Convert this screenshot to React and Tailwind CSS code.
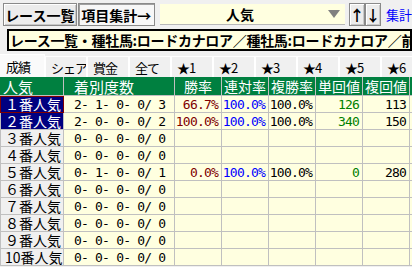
import React from 'react';

const rows = [
    { name: '１番人気', rec: '2- 1- 0- 0/ 3', win: '66.7%', ren: '100.0%', fuku: '100.0%', tan: '126', fk: '113', sel: true, focus: true },
    { name: '２番人気', rec: '2- 0- 0- 0/ 2', win: '100.0%', ren: '100.0%', fuku: '100.0%', tan: '340', fk: '150', sel: true },
    { name: '３番人気', rec: '0- 0- 0- 0/ 0' },
    { name: '４番人気', rec: '0- 0- 0- 0/ 0' },
    { name: '５番人気', rec: '0- 1- 0- 0/ 1', win: '0.0%', ren: '100.0%', fuku: '100.0%', tan: '0', fk: '280' },
    { name: '６番人気', rec: '0- 0- 0- 0/ 0' },
    { name: '７番人気', rec: '0- 0- 0- 0/ 0' },
    { name: '８番人気', rec: '0- 0- 0- 0/ 0' },
    { name: '９番人気', rec: '0- 0- 0- 0/ 0' },
    { name: '10番人気', rec: '0- 0- 0- 0/ 0' },
];

const tabs = ['成績', 'シェア', '賞金', '全て', '★1', '★2', '★3', '★4', '★5', '★6'];

const cols = 'grid grid-cols-[64px_111px_47px_47px_47px_47px_47px_47px]';
const mono = "font-['DejaVu_Sans_Mono',monospace] text-[13px] tracking-[-0.8px] whitespace-pre";
const bevel = 'border border-[#8a8a8a] shadow-[inset_1px_1px_0_#ffffff,inset_-1px_-1px_0_#c8c8c8] bg-[#ececec]';

function Num({ children, color }) {
    return (
        <div className={`h-[17px] border-r border-b border-[#c0c0c0] bg-[#ffffe0] flex items-center justify-end pr-[3px] ${mono} ${color}`}>
            {children}
        </div>
    );
}

export default function App() {
    return (
        <div className="w-[412px] h-[267px] overflow-hidden bg-[#f0f0f0] text-black font-['Noto_Sans_CJK_JP',sans-serif] leading-none">
            {/* Top bar */}
            <div className="flex items-start h-[28px] pt-[3px] pl-[3px] whitespace-nowrap">
                <button className={`w-[74px] h-[23px] ${bevel} text-[14px] font-bold flex items-center justify-center`}>
                    レース一覧
                </button>
                <button className="w-[78px] h-[23px] ml-[1px] border border-[#8a8a8a] bg-[#f7f7f7] shadow-[inset_1px_1px_0_#a0a0a0] text-[14px] font-bold flex items-center justify-center">
                    項目集計→
                </button>
                <div className="ml-[5px] mt-[1px] w-[186px] h-[21px] bg-[#ffffe0] border-b border-[#b8b8b8] flex items-center">
                    <span className="flex-1 text-center text-[14px] font-bold pr-[8px]">人気</span>
                    <svg width="12" height="8" viewBox="0 0 12 8" className="mr-[5px]">
                        <polygon points="0,0 12,0 6,8" fill="#808080" />
                    </svg>
                </div>
                <button className={`ml-[4px] w-[16px] h-[23px] ${bevel} text-[15px] font-bold flex items-center justify-center`}>↑</button>
                <button className={`w-[16px] h-[23px] ${bevel} text-[15px] font-bold flex items-center justify-center`}>↓</button>
                <span className="ml-[5px] mt-[5px] text-[13px] text-[#0000ff]">集計</span>
            </div>

            {/* Condition box */}
            <div className="ml-[7px] mt-[1px] h-[22px] border-2 border-black bg-[#ffffe0] flex items-center pl-[1px] whitespace-nowrap overflow-hidden text-[14px] font-bold tracking-[-0.3px]">
                レース一覧・種牡馬:ロードカナロア／種牡馬:ロードカナロア／前走
            </div>

            {/* Tabs */}
            <div className="flex items-end h-[26px] pt-[2px] whitespace-nowrap">
                {tabs.map((t, i) => (
                    <div
                        key={t}
                        className={`shrink-0 overflow-hidden flex items-center pl-[5px] text-[13px] tracking-[-1px] border-r border-[#707070] ${i === 0 ? 'w-[45px] h-[23px] bg-[#fafafa] border-t border-white pl-[6px]' : 'w-[42px] h-[21px] bg-[#f0f0f0] border-t border-l border-white'}`}
                    >
                        {t}
                    </div>
                ))}
            </div>

            {/* Table */}
            <div className={`${cols} w-max`}>
                <div className="h-[19px] bg-[#008040] text-white text-[15px] flex items-center pl-[3px] border-r border-b border-[#c0c0c0]">人気</div>
                <div className="h-[19px] bg-[#008040] text-white text-[15px] flex items-center pl-[10px] border-r border-b border-[#c0c0c0]">着別度数</div>
                {['勝率', '連対率', '複勝率', '単回値', '複回値', ''].map((h, i) => (
                    <div key={i} className="h-[19px] bg-[#008040] text-white text-[14px] flex items-center justify-center border-r border-b border-[#c0c0c0]">{h}</div>
                ))}

                {rows.map((r) => (
                    <React.Fragment key={r.name}>
                        <div
                            className={`h-[17px] border-l border-r border-b border-[#c0c0c0] flex items-center pl-[4px] text-[14px] ${r.sel ? 'bg-[#000080] text-white' : 'bg-[#f0f0f0]'} ${r.focus ? 'outline outline-1 -outline-offset-1 outline-[#800000]' : ''}`}
                        >
                            {r.name}
                        </div>
                        <div className={`h-[17px] border-r border-b border-[#c0c0c0] bg-[#ffffe0] flex items-center pl-[10px] ${mono}`}>
                            {r.rec}
                        </div>
                        <Num color="text-[#800000]">{r.win}</Num>
                        <Num color="text-[#0000ff]">{r.ren}</Num>
                        <Num color="text-black">{r.fuku}</Num>
                        <Num color="text-[#008000]">{r.tan}</Num>
                        <Num color="text-black">{r.fk}</Num>
                        <Num color="text-black"></Num>
                    </React.Fragment>
                ))}
            </div>
        </div>
    );
}
